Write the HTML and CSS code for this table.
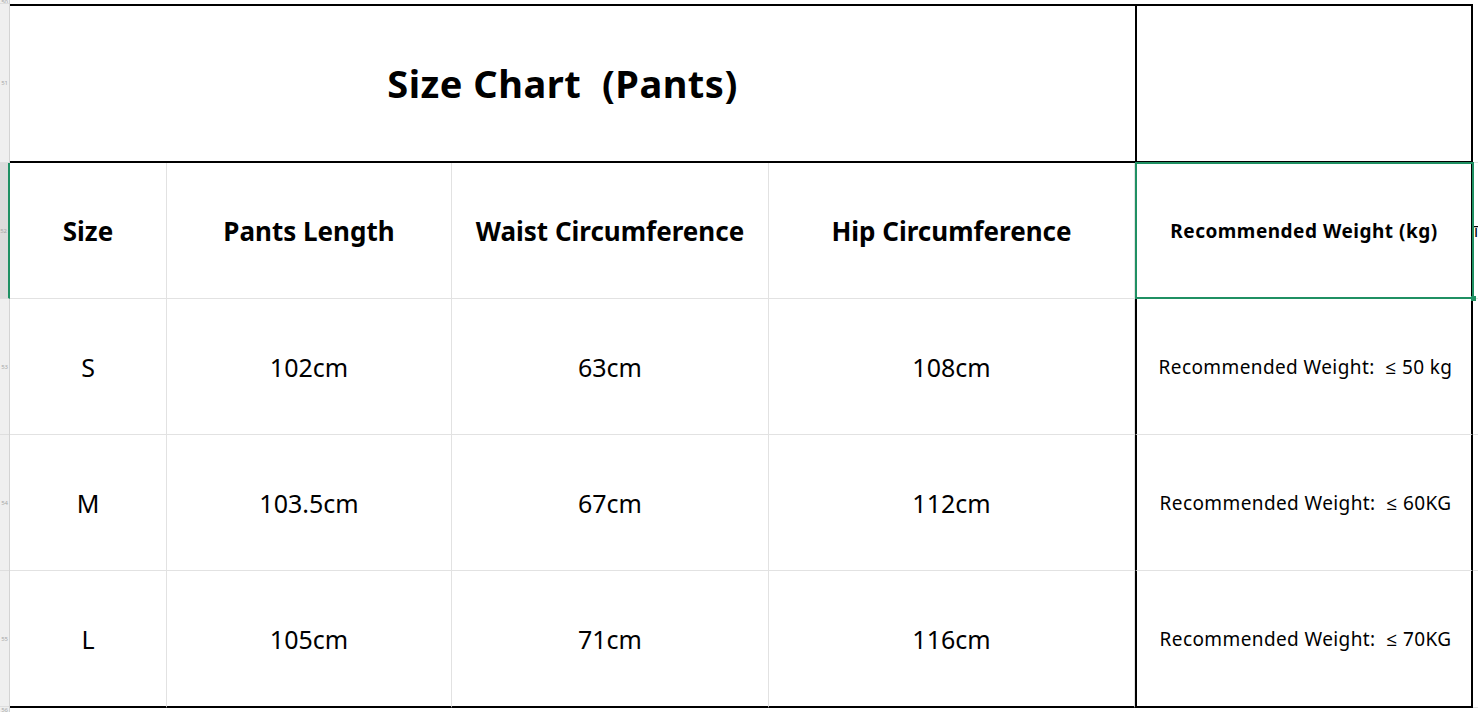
FILE: index.html
```html
<!DOCTYPE html>
<html>
<head>
<meta charset="utf-8">
<link rel="stylesheet" href="styles.css">
</head>
<body>
<div class="sheet">
  <div class="gutter">
    <div class="gh g-top"><span>50</span></div>
    <div class="gh g-title"><span>51</span></div>
    <div class="gh g-head"><span>52</span></div>
    <div class="gh g-row"><span>53</span></div>
    <div class="gh g-row"><span>54</span></div>
    <div class="gh g-row"><span>55</span></div>
    <div class="gh g-rest"><span>56</span></div>
  </div>
  <div class="area">
    <div class="strip"></div>
    <div class="grid">
      <div class="c title">Size Chart &nbsp;(Pants)</div>
      <div class="c e e-title"></div>
      <div class="c x x-title"></div>

      <div class="c hd">Size</div>
      <div class="c hd">Pants Length</div>
      <div class="c hd">Waist Circumference</div>
      <div class="c hd">Hip Circumference</div>
      <div class="c e e-hd">Recommended Weight (kg)<div class="sel"><i class="handle"></i></div></div>
      <div class="c x"><span class="peek">ī</span></div>

      <div class="c">S</div>
      <div class="c">102cm</div>
      <div class="c">63cm</div>
      <div class="c">108cm</div>
      <div class="c e e-val">Recommended Weight: &nbsp;≤ 50 kg</div>
      <div class="c x"></div>

      <div class="c">M</div>
      <div class="c">103.5cm</div>
      <div class="c">67cm</div>
      <div class="c">112cm</div>
      <div class="c e e-val">Recommended Weight: &nbsp;≤ 60KG</div>
      <div class="c x"></div>

      <div class="c last">L</div>
      <div class="c last">105cm</div>
      <div class="c last">71cm</div>
      <div class="c last">116cm</div>
      <div class="c e e-val last">Recommended Weight: &nbsp;≤ 70KG</div>
      <div class="c x"></div>
    </div>
  </div>
</div>
</body>
</html>
```

FILE: styles.css
```css
* { box-sizing: border-box; }
html, body {
  margin: 0;
  padding: 0;
  background: #ffffff;
  overflow: hidden;
}
body {
  font-family: "Noto Sans", "Open Sans", "Noto Sans CJK SC", sans-serif;
  color: #000;
  width: 1478px;
  height: 712px;
}
.sheet {
  display: flex;
  width: 1478px;
  height: 712px;
}
.gutter {
  width: 10px;
  flex: none;
  display: flex;
  flex-direction: column;
  background: #efefef;
  border-right: 1px solid #d3d3d3;
}
.gh {
  display: flex;
  align-items: center;
  justify-content: flex-end;
  overflow: hidden;
  font-size: 6px;
  color: #a8a8a8;
  border-bottom: 1px solid #dedede;
  padding-right: 1px;
  white-space: nowrap;
}
.g-top { height: 4px; align-items: flex-start; line-height: 4px; }
.g-title { height: 159px; }
.g-head {
  height: 136px;
  background: #dcdcdc;
  border-right: 2px solid #1f9063;
  margin-right: -1px;
}
.g-row { height: 136px; }
.g-rest { flex: 1; border-bottom: none; }

.area {
  flex: 1;
  display: flex;
  flex-direction: column;
}
.strip { height: 4px; flex: none; }
.grid {
  display: grid;
  grid-template-columns: 157px 285px 317px 366px 338px 1fr;
  grid-template-rows: 159px 136px 136px 136px 137px;
}
.c {
  display: flex;
  align-items: center;
  justify-content: center;
  text-align: center;
  border-right: 1px solid #e2e2e2;
  border-bottom: 1px solid #e2e2e2;
  font-size: 25px;
  white-space: nowrap;
  position: relative;
}
.title {
  grid-column: span 4;
  border-top: 2px solid #000;
  border-bottom: 2px solid #000;
  border-right: none;
  font-size: 38px;
  letter-spacing: 0.5px;
  font-weight: 700;
  padding-bottom: 1px;
  padding-right: 20px;
}
.hd {
  font-size: 26px;
  font-weight: 700;
  padding-top: 1px;
}
.e {
  border-left: 2px solid #000;
  border-right: 2px solid #000;
  font-size: 19px;
  letter-spacing: 0.4px;
}
.e-title {
  border-top: 2px solid #000;
  border-bottom: 2px solid #000;
}
.e-hd {
  font-weight: 700;
  font-size: 19px;
  letter-spacing: 0.5px;
  padding-top: 1px;
}
.e-val { padding-left: 3px; }
.last { border-bottom: 2px solid #000; }
.x {
  border-right: none;
  overflow: hidden;
  justify-content: flex-start;
}
.x-title { border-bottom: 1px solid #e2e2e2; }
.peek { font-size: 16px; margin-left: 1px; }

.sel {
  position: absolute;
  z-index: 2;
  top: -1px;
  left: -2px;
  right: -3px;
  bottom: -1px;
  border: 2px solid #1f9063;
}
.handle {
  position: absolute;
  right: -4px;
  bottom: -4px;
  width: 5px;
  height: 5px;
  background: #1f9063;
}
```
